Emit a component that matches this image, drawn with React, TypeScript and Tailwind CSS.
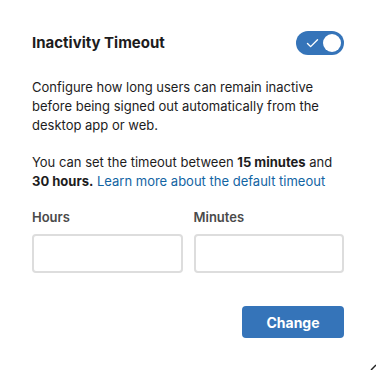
import { Check } from "lucide-react";

export default function App() {
  return (
    <div className="relative h-[370px] w-[376px] bg-white px-8 pt-[31px] text-[#1d1c1d] font-['Inter',sans-serif]">
      <div className="flex items-center justify-between">
        <h2 className="text-[15px] font-bold leading-[22px]">Inactivity Timeout</h2>
        <div className="flex h-6 w-12 items-center justify-between rounded-full bg-[#3574b9] pl-[9px] pr-[3px]">
          <Check className="h-[15px] w-[15px] text-white" strokeWidth={2.25} />
          <span className="h-[18px] w-[18px] rounded-full bg-white" />
        </div>
      </div>

      <p className="mt-[23px] text-[13px] leading-[19px]">
        Configure how long users can remain inactive before being signed out automatically from the desktop app or web.
      </p>

      <p className="mt-[18px] text-[13px] leading-[19px]">
        You can set the timeout between <b className="font-bold">15 minutes</b> and <b className="font-bold">30 hours.</b>{" "}
        <a className="text-[#1264a3]">Learn more about the default timeout</a>
      </p>

      <div className="mt-[17px] grid grid-cols-2 gap-[11px]">
        <label className="flex flex-col">
          <span className="text-[13px] font-semibold leading-[18px] text-[#4a4a4a]">Hours</span>
          <input className="mt-[8px] h-[39px] rounded-[4px] border-2 border-[#dddddd] bg-white px-2 outline-none" />
        </label>
        <label className="flex flex-col">
          <span className="text-[13px] font-semibold leading-[18px] text-[#4a4a4a]">Minutes</span>
          <input className="mt-[8px] h-[39px] rounded-[4px] border-2 border-[#dddddd] bg-white px-2 outline-none" />
        </label>
      </div>

      <div className="mt-[33px] flex justify-end">
        <button className="h-8 w-[102px] rounded-[4px] bg-[#3574b9] text-[14px] font-bold text-white">Change</button>
      </div>

      <svg className="absolute bottom-0 right-0" width="6" height="6" viewBox="0 0 6 6">
        <path d="M1 6 L6 1" stroke="#222" strokeWidth="1.5" />
      </svg>
    </div>
  );
}
